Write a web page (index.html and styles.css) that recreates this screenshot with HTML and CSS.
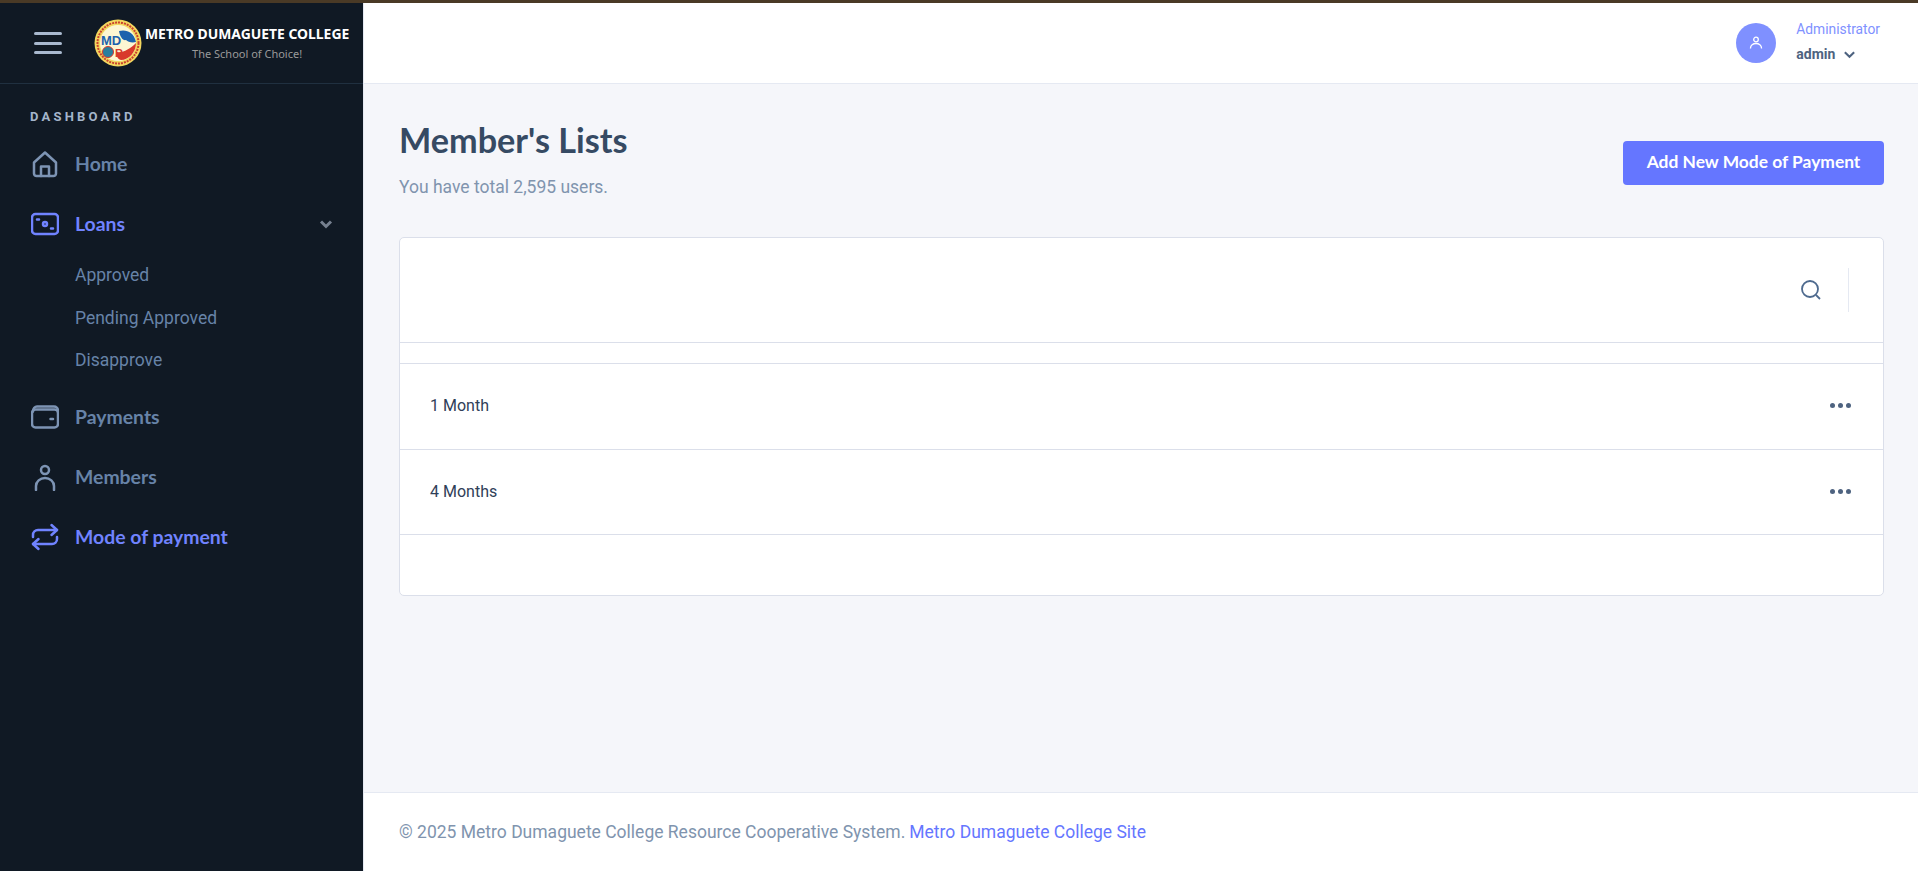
FILE: index.html
```html
<!DOCTYPE html>
<html lang="en">
<head>
  <meta charset="UTF-8" />
  <meta name="viewport" content="width=device-width, initial-scale=1.0"/>
  <title>Member's Lists</title>
  <link rel="stylesheet" href="styles.css">
</head>
<body>
  <div class="topline"></div>
  <div class="app">
    <!-- Sidebar -->
    <aside class="sidebar">
      <div class="brand">
        <button class="burger"><span></span><span></span><span></span></button>
        <svg class="logo" viewBox="0 0 48 48">
          <circle cx="24" cy="24" r="23.5" fill="#f3d75f"/>
          <circle cx="24" cy="24" r="20.500" fill="none" stroke="#c9412f" stroke-width="2" stroke-dasharray="2 1"/>
          <circle cx="24" cy="24" r="18" fill="#fdf6d2"/>
          <path d="M25 12c7-2 15 1 17 11-4 1-8 0-10-2-3 1-6-3-7-9z" fill="#1c62ad"/>
          <path d="M23 33c6 1 13-3 19-9 0 9-7 17-15 17-4-1-5-5-4-8z" fill="#d8392b"/>
          <text class="logo-md" x="7" y="26">MD</text>
          <circle cx="14" cy="33" r="5.500" fill="#2a7f9e" stroke="#d8392b"/>
          <text class="logo-rc" x="21" y="38">R</text>
        </svg>
        <div class="brand-text">
          <div class="brand-name">METRO DUMAGUETE COLLEGE</div>
          <div class="brand-sub">The School of Choice!</div>
        </div>
      </div>

      <div class="menu-label">DASHBOARD</div>
      <ul class="menu">
        <li class="menu-item">
          <svg class="menu-icon" viewBox="0 0 28 28"><path d="M3 12.500 14 2.500l11 10v11a2.500 2.500 0 0 1-2.500 2.500h-17A2.500 2.500 0 0 1 3 23.500z"/><path d="M10 26V16.500h8V26"/></svg>
          <span>Home</span>
        </li>
        <li class="menu-item active">
          <svg class="menu-icon" viewBox="0 0 28 28"><rect x="1" y="4" width="26" height="20" rx="3.500"/><path d="M6 9.500h2M20 18.500h2"/><circle cx="14" cy="14" r="2"/></svg>
          <span>Loans</span>
          <svg class="caret" viewBox="0 0 14 14"><path d="M2 4.500 7 9.500l5-5"/></svg>
        </li>
        <li>
          <ul class="submenu">
            <li>Approved</li>
            <li>Pending Approved</li>
            <li>Disapprove</li>
          </ul>
        </li>
        <li class="menu-item">
          <svg class="menu-icon" viewBox="0 0 28 28"><path d="M2 8.500c0-3 2-5 4-5h17c2 0 4 1.500 4 4.500"/><rect x="1" y="6.500" width="26" height="18" rx="3.500"/><path d="M19.500 16h2.500"/></svg>
          <span>Payments</span>
        </li>
        <li class="menu-item">
          <svg class="menu-icon" viewBox="0 0 28 28"><circle cx="14" cy="7" r="4"/><path d="M5 27v-4a9 8 0 0 1 18 0v4"/></svg>
          <span>Members</span>
        </li>
        <li class="menu-item active strong">
          <svg class="menu-icon" viewBox="0 0 28 28"><path d="M2 14v-2a5 5 0 0 1 5-5h19"/><path d="M20.500 2 26 7l-5.500 5"/><path d="M26 14v2a5 5 0 0 1-5 5H2"/><path d="M7.500 16 2 21l5.500 5"/></svg>
          <span>Mode of payment</span>
        </li>
      </ul>
    </aside>

    <div class="main">
      <!-- Header -->
      <header class="topbar">
        <div class="user">
          <div class="avatar">
            <svg viewBox="0 0 14 14"><circle cx="7" cy="3.500" r="2.300"/><path d="M1.500 12.500v-.500a5.500 4.500 0 0 1 11 0v.500"/></svg>
          </div>
          <div class="user-info">
            <div class="user-role">Administrator</div>
            <div class="user-name">admin
              <svg class="user-caret" viewBox="0 0 14 14"><path d="M2 4.500 7 9.500l5-5"/></svg>
            </div>
          </div>
        </div>
      </header>

      <main class="content">
        <div class="page-head">
          <div>
            <h1>Member's Lists</h1>
            <p>You have total 2,595 users.</p>
          </div>
          <button class="btn-add">Add New Mode of Payment</button>
        </div>

        <section class="card">
          <div class="card-tools">
            <svg class="search" viewBox="0 0 22 22"><circle cx="10" cy="10" r="8"/><path d="m16 16 4 4"/></svg>
            <span class="tools-sep"></span>
          </div>
          <div class="list-head"></div>
          <div class="list-row">
            <span>1 Month</span>
            <span class="dots"><i></i><i></i><i></i></span>
          </div>
          <div class="list-row">
            <span>4 Months</span>
            <span class="dots"><i></i><i></i><i></i></span>
          </div>
          <div class="card-foot"></div>
        </section>
      </main>

      <footer class="footer">
        &copy; 2025 Metro Dumaguete College Resource Cooperative System. <a href="#">Metro Dumaguete College Site</a>
      </footer>
    </div>
  </div>
</body>
</html>
```

FILE: styles.css
```css
* {
  box-sizing: border-box;
}

body {
  margin: 0;
  height: 871px;
  display: flex;
  flex-direction: column;
  overflow: hidden;
  font-family: Roboto, "Liberation Sans", sans-serif;
  background: #f5f6fa;
  color: #364a63;
}

.topline {
  height: 3px;
  background: #4a3a26;
}

.app {
  flex: 1;
  display: flex;
  min-height: 0;
}

/* Sidebar */
.sidebar {
  width: 364px;
  flex-shrink: 0;
  background: #101924;
  border-right: 1px solid #e5e9f2;
}

.brand {
  height: 81px;
  display: flex;
  align-items: center;
  padding-left: 34px;
  border-bottom: 1px solid #203040;
}

.burger {
  width: 28px;
  height: 22px;
  padding: 0;
  border: none;
  background: none;
  display: flex;
  flex-direction: column;
  justify-content: space-between;
}

.burger span {
  display: block;
  height: 3px;
  border-radius: 1.500px;
  background: #a9b9cf;
}

.logo {
  width: 48px;
  height: 48px;
  margin-left: 32px;
}

.logo-md {
  font-family: "Liberation Sans", sans-serif;
  font-size: 13px;
  font-weight: 700;
  fill: #1c62ad;
}

.logo-rc {
  font-family: "Liberation Sans", sans-serif;
  font-size: 11px;
  font-weight: 700;
  fill: #d8392b;
}

.brand-text {
  margin-left: 3px;
  text-align: center;
}

.brand-name {
  font-family: "Noto Sans", sans-serif;
  font-size: 13.900px;
  font-weight: 700;
  line-height: 18px;
  color: #fff;
  white-space: nowrap;
}

.brand-sub {
  margin-top: 4px;
  font-family: "Noto Sans", sans-serif;
  font-size: 11px;
  line-height: 14px;
  color: #9a9a9a;
}

.menu-label {
  height: 50px;
  padding: 26px 0 0 30px;
  font-size: 13px;
  font-weight: 700;
  line-height: 14px;
  letter-spacing: 3.200px;
  color: #a4b5cb;
}

.menu, .submenu {
  list-style: none;
  margin: 0;
  padding: 0;
}

.menu-item {
  height: 60px;
  display: flex;
  align-items: center;
  padding-left: 31px;
  font-family: Lato, sans-serif;
  font-size: 19.400px;
  font-weight: 700;
  color: #6783a8;
}

.menu-item span {
  margin-top: -2px;
}

.menu-item.active {
  color: #7083ff;
}

.menu-icon {
  width: 28px;
  height: 28px;
  margin-right: 16px;
  fill: none;
  stroke: #7d94b4;
  stroke-width: 2.500;
  stroke-linecap: round;
  stroke-linejoin: round;
}

.active .menu-icon {
  stroke: #7083ff;
}

.caret {
  width: 14px;
  height: 14px;
  margin-left: auto;
  margin-right: 30px;
  fill: none;
  stroke: #76808f;
  stroke-width: 3;
}

.submenu {
  padding: 0 0 5.500px 75px;
}

.submenu li {
  height: 42.500px;
  line-height: 42.500px;
  font-size: 17.500px;
  color: #6783a8;
}

/* Main column */
.main {
  flex: 1;
  display: flex;
  flex-direction: column;
  min-width: 0;
}

.topbar {
  height: 81px;
  display: flex;
  justify-content: flex-end;
  align-items: center;
  padding-right: 38px;
  background: #fff;
  border-bottom: 1px solid #e5e9f2;
}

.user {
  display: flex;
  align-items: center;
  gap: 20px;
}

.avatar {
  width: 40px;
  height: 40px;
  border-radius: 50%;
  background: #7f90ff;
  display: flex;
  align-items: center;
  justify-content: center;
}

.avatar svg {
  width: 14px;
  height: 14px;
  fill: none;
  stroke: #fff;
  stroke-width: 1.300;
}

.user-info {
  margin-bottom: 4px;
}

.user-role {
  font-size: 13.800px;
  line-height: 20px;
  color: #8091ff;
}

.user-name {
  margin-top: 5px;
  font-size: 14px;
  font-weight: 700;
  line-height: 20px;
  color: #4e6380;
  display: flex;
  align-items: center;
  gap: 8px;
}

.user-caret {
  width: 13px;
  height: 13px;
  margin-top: 2px;
  fill: none;
  stroke: #4e6380;
  stroke-width: 2.200;
}

.content {
  flex: 1;
  padding: 36px 34px 0 35px;
}

.page-head {
  height: 117px;
  display: flex;
  justify-content: space-between;
  align-items: flex-start;
}

h1 {
  margin: 0;
  font-family: Lato, sans-serif;
  font-size: 34.200px;
  font-weight: 700;
  line-height: 40px;
  color: #364a63;
}

.page-head p {
  margin: 15px 0 0;
  font-size: 17.500px;
  line-height: 24px;
  color: #8094ae;
}

.btn-add {
  width: 261px;
  height: 44px;
  margin-top: 21px;
  padding: 0 0 3px;
  border: none;
  border-radius: 4px;
  background: #6576ff;
  color: #fff;
  font-family: Lato, sans-serif;
  font-size: 17.400px;
  font-weight: 700;
}

.card {
  height: 359px;
  background: #fff;
  border: 1px solid #dbdfea;
  border-radius: 5px;
  display: flex;
  flex-direction: column;
}

.card-tools {
  height: 105px;
  display: flex;
  justify-content: flex-end;
  align-items: center;
  padding-right: 34px;
  border-bottom: 1px solid #dbdfea;
}

.search {
  width: 22px;
  height: 22px;
  fill: none;
  stroke: #4e6a8e;
  stroke-width: 1.800;
}

.tools-sep {
  width: 1px;
  height: 44px;
  margin-left: 26px;
  background: #e5e9f2;
}

.list-head {
  height: 21px;
  border-bottom: 1px solid #dbdfea;
}

.list-row {
  height: 85.500px;
  display: flex;
  justify-content: space-between;
  align-items: center;
  padding: 0 32px 1px 30px;
  font-size: 16px;
  color: #2f4058;
  border-bottom: 1px solid #dbdfea;
}

.dots {
  display: flex;
  gap: 3px;
}

.dots i {
  width: 5px;
  height: 5px;
  border-radius: 50%;
  background: #4e6380;
}

.card-foot {
  flex: 1;
}

.footer {
  height: 79px;
  display: flex;
  align-items: center;
  gap: 4px;
  padding-left: 35px;
  background: #fff;
  border-top: 1px solid #e5e9f2;
  font-size: 17.500px;
  color: #8094ae;
}

.footer a {
  color: #6576ff;
  text-decoration: none;
}
```
